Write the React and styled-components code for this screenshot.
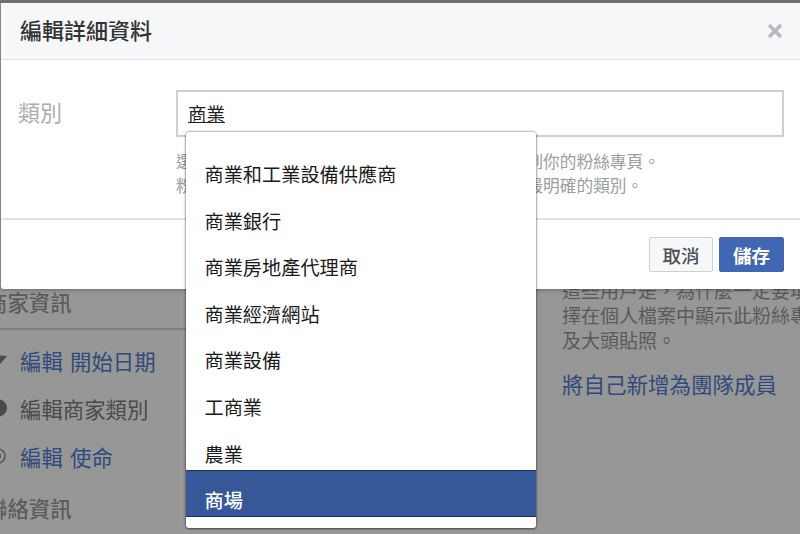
import React from "react";
import styled, { createGlobalStyle } from "styled-components";

const Global = createGlobalStyle`
  html, body { margin: 0; padding: 0; background: #979797; }
  * { box-sizing: border-box; }
  body { font-family: "Noto Sans CJK TC", "Liberation Sans", sans-serif; }
`;

const Page = styled.div`
  position: relative;
  width: 800px;
  height: 534px;
  overflow: hidden;
  background: #979797;
  border-top: 3px solid #6e6e6e;
`;

const Behind = styled.div`
  display: grid;
  grid-template-columns: 562px 238px;
  height: 531px;
  white-space: nowrap;
  overflow: hidden;
`;

const LeftColumn = styled.div`
  padding-top: 284px;
  min-width: 0;
`;

const SectionTitle = styled.div`
  height: 30px;
  margin-left: -14px;
  font-size: 21.4px;
  line-height: 30px;
  font-weight: 500;
  color: #5c5c5c;
`;

const SectionRule = styled.div`
  width: 400px;
  height: 2px;
  margin: 11px 0 6px;
  background: #808080;
`;

const InfoRow = styled.div`
  display: flex;
  align-items: center;
  height: 48px;
  font-size: 21.4px;
  word-spacing: 2.5px;
  color: ${p => (p.$link ? "#2f4a7c" : "#4a4a4a")};
`;

const RowIcon = styled.svg`
  width: 20px;
  height: 20px;
  flex: none;
`;

const SecondTitle = styled(SectionTitle)`
  margin-top: 13px;
`;

const RightColumn = styled.div`
  padding-top: 274px;
  font-size: 19px;
  line-height: 25px;
  color: #5a5a5a;
  overflow: hidden;
`;

const RightLink = styled.div`
  margin-top: 17px;
  font-size: 21.5px;
  line-height: 30px;
  color: #2f4a7c;
`;

const Modal = styled.div`
  position: absolute;
  left: 1px;
  top: 0;
  width: 799px;
  height: 286px;
  background: #fff;
  border-radius: 3px 0 0 3px;
  box-shadow: 0 1px 4px rgba(0, 0, 0, 0.3);
`;

const Header = styled.div`
  display: flex;
  align-items: center;
  justify-content: space-between;
  height: 57px;
  padding: 0 17px 0 19px;
  background: #f6f7f9;
  border-bottom: 1px solid #e1e3e8;
  font-size: 22px;
  font-weight: 500;
  color: #333;
`;

const HeaderTitle = styled.span`
  position: relative;
  top: -2px;
`;

const CloseIcon = styled.svg`
  width: 16px;
  height: 16px;
  flex: none;
`;

const Body = styled.div`
  display: grid;
  grid-template-columns: 175px 608px;
  height: 160px;
  padding-top: 30px;
  border-bottom: 2px solid #e3e3e3;
`;

const FieldLabel = styled.div`
  padding: 4px 0 0 17px;
  font-size: 22px;
  line-height: 34px;
  color: #a9acb2;
`;

const FieldColumn = styled.div`
  position: relative;
`;

const Input = styled.div`
  height: 47px;
  padding: 0 10px;
  border: 2px solid #cfcfcf;
  font-size: 18.5px;
  line-height: 43px;
  color: #1d2129;
`;

const Underlined = styled.span`
  text-decoration: underline;
  text-underline-offset: 1px;
`;

const Help = styled.div`
  margin-top: 12px;
  font-size: 16.7px;
  line-height: 24px;
  color: #9a9da3;
  white-space: nowrap;
`;

const Footer = styled.div`
  display: flex;
  justify-content: flex-end;
  gap: 6px;
  padding: 17px 16px 0 0;
`;

const Button = styled.button`
  width: ${p => (p.$primary ? "65px" : "64px")};
  height: 35px;
  padding: 0;
  border: 1px solid ${p => (p.$primary ? "#4267b2" : "#ced0d4")};
  border-radius: 2px;
  background: ${p => (p.$primary ? "#4267b2" : "#f6f7f9")};
  color: ${p => (p.$primary ? "#fff" : "#4b4f56")};
  font: ${p => (p.$primary ? 700 : 500)} 18.5px "Noto Sans CJK TC", sans-serif;
`;

const Menu = styled.ul`
  position: absolute;
  left: 10px;
  top: 42px;
  width: 350px;
  height: 396px;
  margin: 0;
  padding: 12px 0 0;
  list-style: none;
  background: #fff;
  border-radius: 3px;
  box-shadow: 0 0 3px rgba(0, 0, 0, 0.55), 0 1px 2px rgba(0, 0, 0, 0.35);
`;

const MenuItem = styled.li`
  height: ${p => (p.$active ? "47px" : "46.6px")};
  padding-left: 18.5px;
  font-size: 19.2px;
  line-height: ${p => (p.$active ? "59px" : "60px")};
  font-weight: ${p => (p.$active ? 500 : 400)};
  color: ${p => (p.$active ? "#fff" : "#1a1a1a")};
  background: ${p => (p.$active ? "#365899" : "transparent")};
  border-top: ${p => (p.$active ? "1.5px solid #1b3263" : "none")};
  border-bottom: ${p => (p.$active ? "1.5px solid #1b3263" : "none")};
`;

const items = ["商業和工業設備供應商", "商業銀行", "商業房地產代理商", "商業經濟網站", "商業設備", "工商業", "農業", "商場"];

export default function App() {
  return (
    <Page>
      <Global />
      <Behind>
        <LeftColumn>
          <SectionTitle>商家資訊</SectionTitle>
          <SectionRule />
          <InfoRow $link>
            <RowIcon viewBox="0 0 20 20"><path d="M0 5.5l7 .5L0 14z" fill="#4a4a4a" /></RowIcon>
            編輯 開始日期
          </InfoRow>
          <InfoRow>
            <RowIcon viewBox="0 0 20 20"><circle cx="-1.5" cy="10" r="8.5" fill="#4a4a4a" /></RowIcon>
            編輯商家類別
          </InfoRow>
          <InfoRow $link>
            <RowIcon viewBox="0 0 20 20"><circle cx="-2" cy="10" r="7" fill="none" stroke="#555" strokeWidth="1.6" /><circle cx="-2" cy="10" r="3" fill="#555" /></RowIcon>
            編輯 使命
          </InfoRow>
          <SecondTitle>聯絡資訊</SecondTitle>
        </LeftColumn>
        <RightColumn>
          <div>這些用戶是，為什麼一定要填</div>
          <div>擇在個人檔案中顯示此粉絲專</div>
          <div>及大頭貼照。</div>
          <RightLink>將自己新增為團隊成員</RightLink>
        </RightColumn>
      </Behind>
      <Modal>
        <Header>
          <HeaderTitle>編輯詳細資料</HeaderTitle>
          <CloseIcon viewBox="0 0 16 16" aria-hidden="true">
            <path d="M2 2l12 12M14 2L2 14" stroke="#b6b9c0" strokeWidth="3.4" />
          </CloseIcon>
        </Header>
        <Body>
          <FieldLabel>類別</FieldLabel>
          <FieldColumn>
            <Input><Underlined>商業</Underlined></Input>
            <Help>
              <div>選擇最能代表你商家的類別，協助用戶更容易找到你的粉絲專頁。</div>
              <div>粉絲專頁可以選擇多個類別，請選擇符合商家且最明確的類別。</div>
            </Help>
            <Menu>
              {items.map(t => (
                <MenuItem key={t} $active={t === "商場"}>{t}</MenuItem>
              ))}
            </Menu>
          </FieldColumn>
        </Body>
        <Footer>
          <Button>取消</Button>
          <Button $primary>儲存</Button>
        </Footer>
      </Modal>
    </Page>
  );
}
